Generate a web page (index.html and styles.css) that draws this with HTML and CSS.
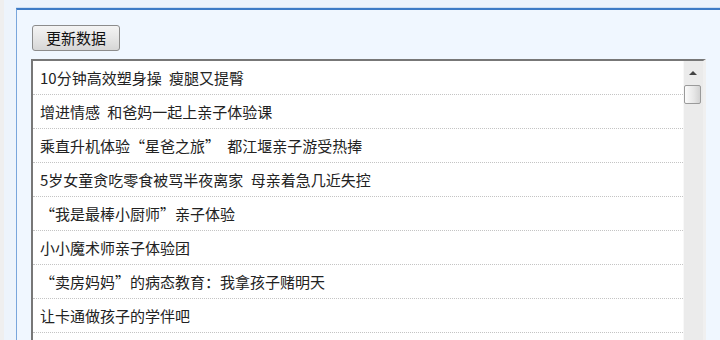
FILE: index.html
```html
<!DOCTYPE html>
<html lang="zh-CN">
<head>
    <meta charset="UTF-8">
    <title>新闻列表</title>
    <link rel="stylesheet" href="styles.css">
</head>
<body>
    <div class="page">
        <div class="panel">
            <button class="refresh-btn">更新数据</button>

            <div class="listbox">
                <ul class="news-list">
                    <li>10分钟高效塑身操 瘦腿又提臀</li>
                    <li>增进情感 和爸妈一起上亲子体验课</li>
                    <li>乘直升机体验“星爸之旅” 都江堰亲子游受热捧</li>
                    <li>5岁女童贪吃零食被骂半夜离家 母亲着急几近失控</li>
                    <li>“我是最棒小厨师”亲子体验</li>
                    <li>小小魔术师亲子体验团</li>
                    <li>“卖房妈妈”的病态教育：我拿孩子赌明天</li>
                    <li>让卡通做孩子的学伴吧</li>
                </ul>
                <!-- fake scrollbar, like the old listbox control -->
                <div class="scrollbar">
                    <span class="arrow-up"></span>
                    <span class="thumb"></span>
                </div>
            </div>
        </div>
    </div>
</body>
</html>
```

FILE: styles.css
```css
* {
    box-sizing: border-box;
}

html, body {
    height: 100%;
    overflow: hidden;
}

body {
    margin: 0;
    padding-left: 4px;
    background-color: #efefef;
    font-family: "Noto Sans CJK SC", "Noto Sans", sans-serif;
    color: #222;
}

.page {
    height: 100%;
    padding: 8px 0 0 12px;
    background-color: #edf4fc;
}

/* Blue framed panel */
.panel {
    height: 100%;
    padding: 15px 14px 0 14px;
    background-color: #f0f7ff;
    border-top: 2px solid #3f7cc6;
    border-left: 1px solid #79a6dc;
    box-shadow: 0 -1px 0 #cfe0f3;
}

.refresh-btn {
    display: block;
    width: 88px;
    height: 26px;
    margin-left: 1px;
    padding: 0;
    font-family: inherit;
    font-size: 15px;
    line-height: 24px;
    color: #111;
    background: linear-gradient(#f4f4f4, #e6e6e6 50%, #d6d6d6);
    border: 1px solid #8c8c8c;
    border-radius: 3px;
    cursor: pointer;
}

/* List box */
.listbox {
    display: flex;
    margin-top: 8px;
    height: 320px;
    background-color: #ffffff;
    border-top: 2px solid #777;
    border-left: 2px solid #777;
    border-right: 3px solid #f0f0f0;
}

.news-list {
    flex: 1;
    margin: 0;
    padding: 0;
    list-style: none;
    overflow: hidden;
}

.news-list li {
    height: 34px;
    padding-left: 7px;
    font-size: 15px;
    line-height: 33px;
    word-spacing: 4px;
    white-space: nowrap;
    border-bottom: 1px dotted #c4c4c4;
}

.scrollbar {
    width: 20px;
    display: flex;
    flex-direction: column;
    align-items: flex-start;
    background-color: #ebebeb;
    border-left: 1px solid #f8f8f8;
}

.arrow-up {
    margin: 10px 0 0 5px;
    width: 0;
    height: 0;
    border-left: 4px solid transparent;
    border-right: 4px solid transparent;
    border-bottom: 4px solid #444;
}

.thumb {
    margin-top: 10px;
    width: 17px;
    height: 19px;
    background: linear-gradient(to right, #fbfbfb, #e6e6e6 60%, #d2d2d2);
    border: 1px solid #9a9a9a;
    border-radius: 2px;
}
```
